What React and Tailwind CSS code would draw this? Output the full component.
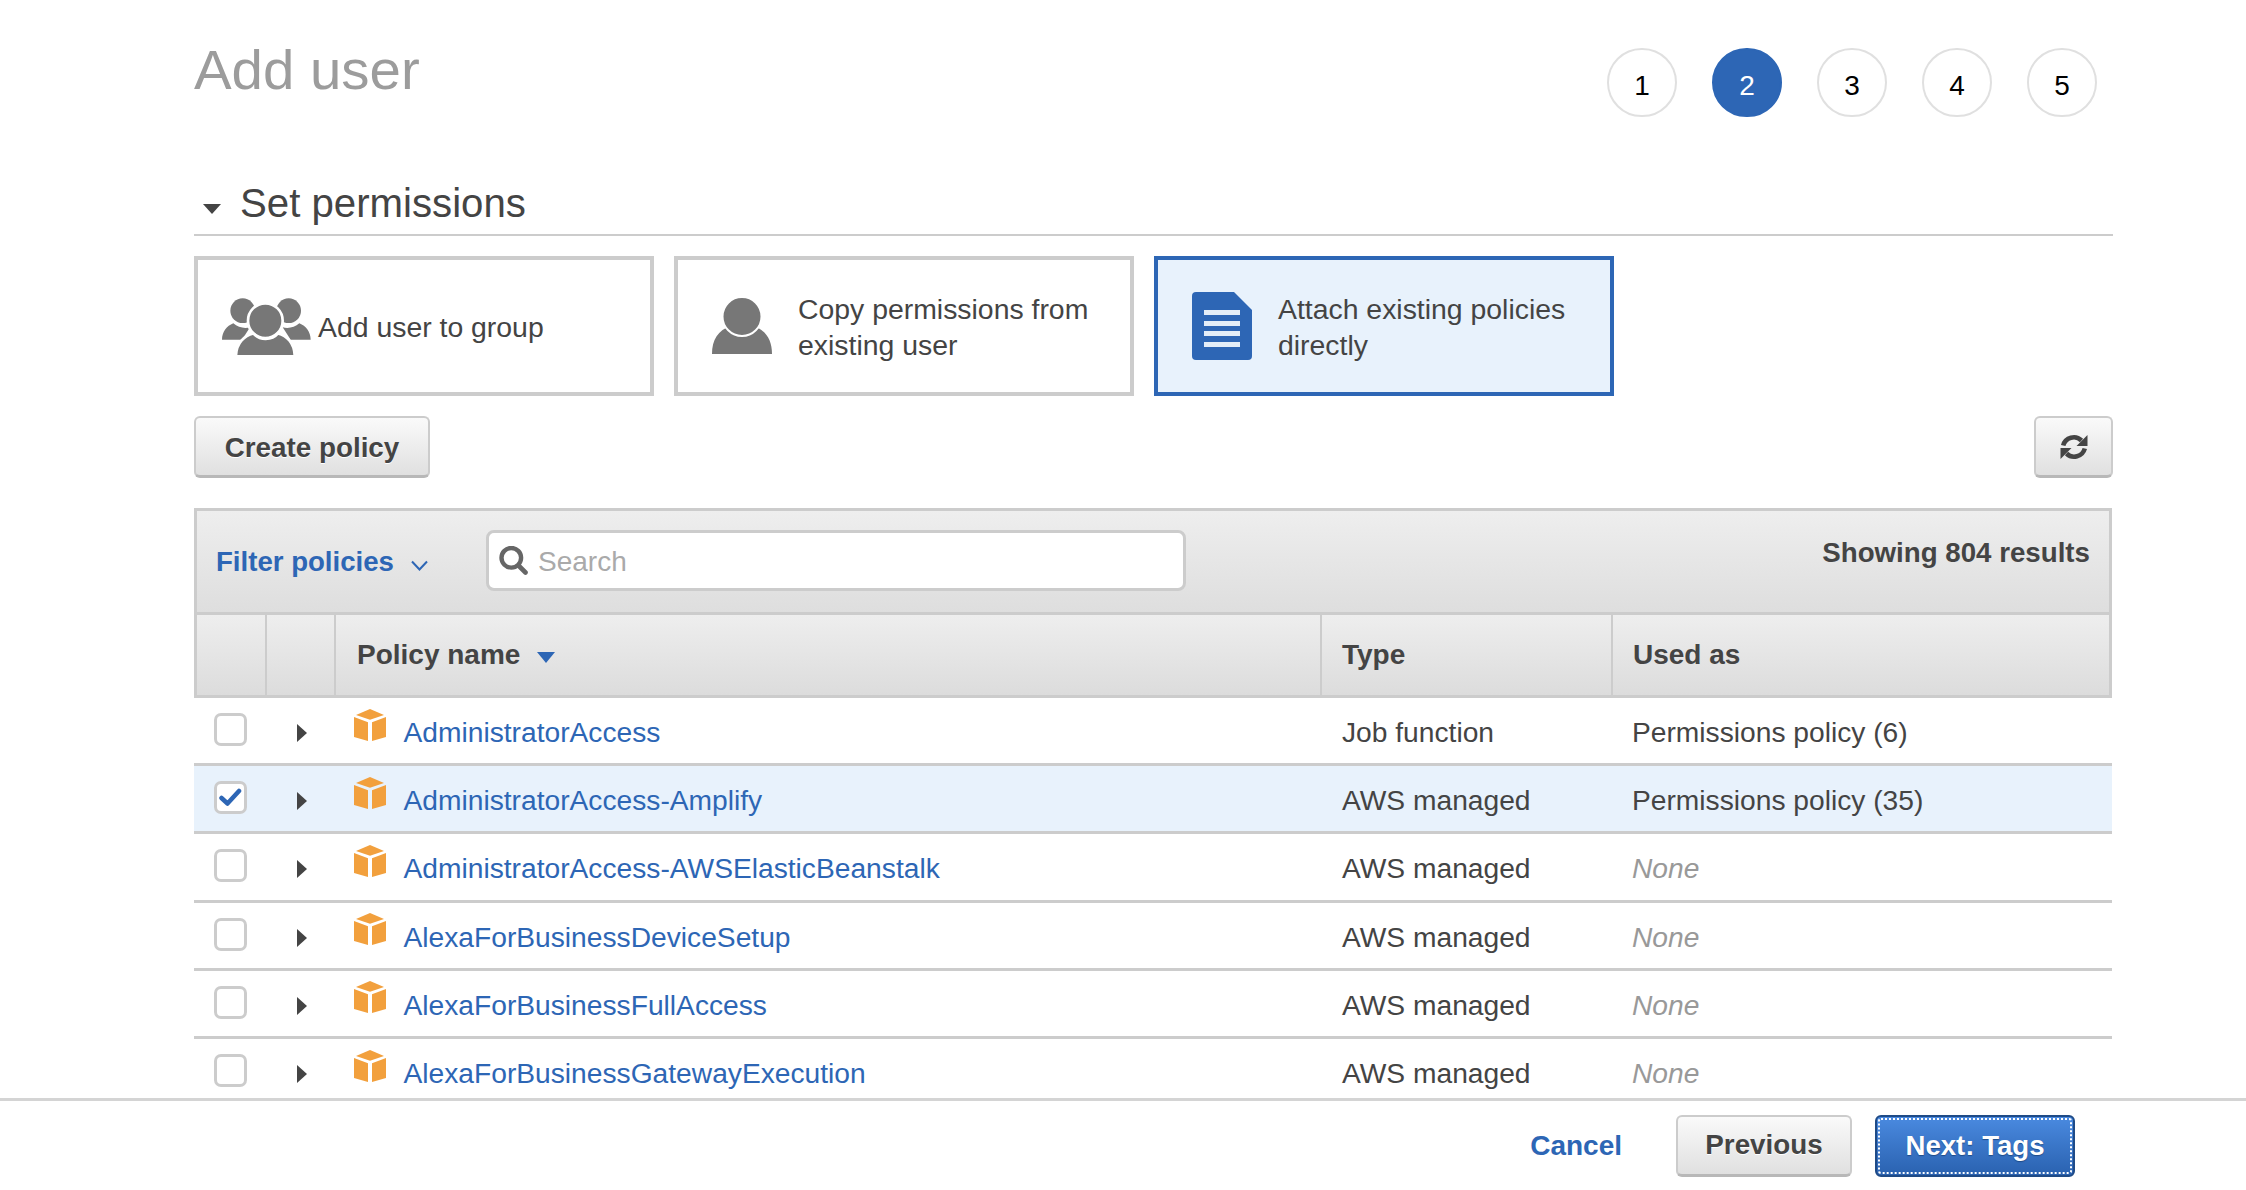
const rows = [
  { name: 'AdministratorAccess', type: 'Job function', used: 'Permissions policy (6)' },
  { name: 'AdministratorAccess-Amplify', type: 'AWS managed', used: 'Permissions policy (35)', checked: true },
  { name: 'AdministratorAccess-AWSElasticBeanstalk', type: 'AWS managed' },
  { name: 'AlexaForBusinessDeviceSetup', type: 'AWS managed' },
  { name: 'AlexaForBusinessFullAccess', type: 'AWS managed' },
  { name: 'AlexaForBusinessGatewayExecution', type: 'AWS managed' },
]

function GroupIcon() {
  return (
    <svg width="89" height="57" viewBox="0 0 267 171" className="shrink-0">
      <g fill="#777777">
        <circle cx="62" cy="38" r="37" />
        <circle cx="200" cy="38" r="37" />
        <path d="M0 125C0 102 14 84 34 76C48 90 70 92 84 88L60 125Z" />
        <path d="M266 125C266 102 252 84 232 76C218 90 196 92 182 88L206 125Z" />
      </g>
      <g fill="#777777" stroke="#ffffff" strokeWidth="8">
        <circle cx="130" cy="68" r="52" />
        <path d="M42 175C42 136 68 112 94 106C112 128 150 128 168 106C194 112 218 136 218 175Z" />
      </g>
    </svg>
  )
}

function PersonIcon() {
  return (
    <svg width="60" height="56" viewBox="0 0 60 56" className="shrink-0">
      <path fill="#777777" d="M0 56C0 42 6 32 19 28C24 36 36 36 41 28C54 32 60 42 60 56Z" />
      <circle cx="30" cy="18.5" r="19.5" fill="#777777" stroke="#ffffff" strokeWidth="2" />
    </svg>
  )
}

function DocIcon() {
  return (
    <svg width="60" height="68" viewBox="0 0 60 68" className="shrink-0">
      <path fill="#2d66b5" d="M4 0H42L60 18V64A4 4 0 0 1 56 68H4A4 4 0 0 1 0 64V4A4 4 0 0 1 4 0Z" />
      <g fill="#e3edf8">
        <rect x="12" y="18" width="36" height="5" />
        <rect x="12" y="29" width="36" height="5" />
        <rect x="12" y="39" width="36" height="5" />
        <rect x="12" y="50" width="36" height="5" />
      </g>
    </svg>
  )
}

function BoxIcon() {
  return (
    <svg width="32" height="32" viewBox="0 0 96 96" fill="#f2a03d" className="shrink-0">
      <path d="M48 0L90 18L48 32L6 18Z" />
      <path d="M0 24L42 40V96L0 84Z" />
      <path d="M96 24L54 40V96L96 84Z" />
    </svg>
  )
}

function RefreshIcon() {
  return (
    <svg width="28" height="28" viewBox="0 0 28 28">
      <g id="half">
        <path d="M3.2 12.5A11 11 0 0 1 21.5 7.5" fill="none" stroke="#444444" strokeWidth="4.6" />
        <path d="M27.5 2V13H16.5Z" fill="#444444" />
      </g>
      <g transform="rotate(180 14 14)">
        <path d="M3.2 12.5A11 11 0 0 1 21.5 7.5" fill="none" stroke="#444444" strokeWidth="4.6" />
        <path d="M27.5 2V13H16.5Z" fill="#444444" />
      </g>
    </svg>
  )
}

function SearchIcon() {
  return (
    <svg width="29" height="29" viewBox="0 0 29 29" className="shrink-0">
      <circle cx="12.3" cy="11.8" r="9.8" fill="none" stroke="#666666" strokeWidth="4.4" />
      <path d="M20 20L26.5 26.5" fill="none" stroke="#666666" strokeWidth="4.6" strokeLinecap="round" />
    </svg>
  )
}

function Card({ icon, selected, gap, pad, children }) {
  return (
    <div
      className={`flex h-[140px] w-[460px] items-center border-4 ${pad} ${gap} ${
        selected ? 'border-[#2d66b5] bg-[#e8f2fc]' : 'border-[#cccccc] bg-white'
      }`}
    >
      {icon}
      <div className="pt-[2px] text-[28.4px] leading-[36px] text-[#444444]">{children}</div>
    </div>
  )
}

function Row({ row }) {
  return (
    <div
      className={`grid h-[68.2px] grid-cols-[71px_69px_986px_291px_1fr] items-center border-b-[3px] border-[#cccccc] ${
        row.checked ? 'bg-[#e8f2fc]' : 'bg-white'
      }`}
    >
      <div className="pl-5 pb-[2px]">
        <div className="flex h-[33px] w-[33px] items-center justify-center rounded-[7px] border-[3px] border-[#cccccc] bg-white">
          {row.checked && (
            <svg width="23" height="19" viewBox="0 0 23 19">
              <path d="M2.5 10L8.5 15.5L20 3" fill="none" stroke="#2d66b5" strokeWidth="4.5" strokeLinecap="round" strokeLinejoin="round" />
            </svg>
          )}
        </div>
      </div>
      <div className="pl-[32px] pt-[5px]">
        <svg width="10" height="18" viewBox="0 0 10 18">
          <path fill="#444444" d="M0 0L10 9L0 18Z" />
        </svg>
      </div>
      <div className="flex items-center gap-[18px] pl-[19.5px]">
        <div className="-mt-[12px]">
          <BoxIcon />
        </div>
        <span className="pt-[3px] text-[#2d66b5]">{row.name}</span>
      </div>
      <div className="pl-[22px] pt-[3px]">{row.type}</div>
      <div className="pl-[21px] pt-[3px]">
        {row.used ? row.used : <span className="italic text-[#999999]">None</span>}
      </div>
    </div>
  )
}

export default function App() {
  return (
    <div className="flex h-[1190px] w-full flex-col overflow-hidden bg-white font-['Liberation_Sans',Arial,sans-serif] text-[28.2px] text-[#444444]">
      <div className="min-h-0 flex-1 overflow-hidden pl-[194px] pr-[133px]">
        <div className="flex items-start justify-between pt-[48px]">
          <h1 className="-mt-[7px] text-[56.4px] leading-[57px] text-[#9c9c9c]">Add user</h1>
          <div className="mr-[16px] flex gap-[35px]">
            {[1, 2, 3, 4, 5].map((n) => (
              <div
                key={n}
                className={`flex h-[69px] w-[70px] items-center justify-center rounded-full border-2 pt-[6px] text-[28px] ${
                  n === 2 ? 'border-[#2d66b5] bg-[#2d66b5] text-white' : 'border-[#e0e0e0] bg-white text-black'
                }`}
              >
                {n}
              </div>
            ))}
          </div>
        </div>

        <div className="mt-[62px] flex items-center gap-[19px] border-b-[2px] border-[#cccccc] pb-[6px] pl-[9px]">
          <svg width="18" height="10" viewBox="0 0 18 10" className="mt-[10px]">
            <path fill="#444444" d="M0 0H18L9 10Z" />
          </svg>
          <h2 className="pt-[1px] text-[40.2px] leading-[48px] text-[#444444]">Set permissions</h2>
        </div>

        <div className="mt-[20px] flex gap-[20px]">
          <Card icon={<GroupIcon />} pad="pl-[24px]" gap="gap-[7px]">Add user to group</Card>
          <Card icon={<PersonIcon />} pad="pl-[34px]" gap="gap-[26px]">Copy permissions from<br />existing user</Card>
          <Card icon={<DocIcon />} pad="pl-[34px]" gap="gap-[26px]" selected>Attach existing policies<br />directly</Card>
        </div>

        <div className="mt-[20px] flex items-center justify-between">
          <button className="h-[62px] w-[236px] rounded-[6px] border-2 border-b-[3px] border-[#cccccc] border-b-[#b8b8b8] bg-gradient-to-b from-[#fafafa] to-[#e0e0e0] pt-[3px] text-[27.8px] font-bold text-[#444444] [text-shadow:0_1px_0_#ffffff]">
            Create policy
          </button>
          <button className="flex h-[62px] w-[79px] items-center justify-center rounded-[6px] border-2 border-b-[3px] border-[#cccccc] border-b-[#b8b8b8] bg-gradient-to-b from-[#fafafa] to-[#e0e0e0]">
            <RefreshIcon />
          </button>
        </div>

        <div className="mt-[30px] mr-[1px]">
          <div className="flex h-[104px] items-start border-x-[3px] border-t-[3px] border-[#cccccc] bg-gradient-to-b from-[#eeeeee] to-[#dedede] pr-[19px]">
            <div className="flex h-[102px] w-[289px] items-center gap-[17px] pl-[19px]">
              <span className="text-[27.6px] font-bold text-[#2d66b5]">Filter policies</span>
              <svg width="17" height="11" viewBox="0 0 17 11" className="mt-[6px]">
                <path d="M1 1.5L8.5 9.5L16 1.5" fill="none" stroke="#2d66b5" strokeWidth="2" />
              </svg>
            </div>
            <div className="mt-[19px] flex h-[61px] w-[700px] items-center gap-[10px] rounded-[8px] border-[3px] border-[#cccccc] bg-white pl-[10px]">
              <SearchIcon />
              <span className="pt-[2px] text-[28px] text-[#aaaaaa]">Search</span>
            </div>
            <div className="mt-[21px] ml-auto text-[27.7px] font-bold text-[#444444]">Showing 804 results</div>
          </div>
          <div className="grid h-[86px] grid-cols-[70px_69px_986px_291px_1fr] border-x-[3px] border-y-[3px] border-[#cccccc] bg-gradient-to-b from-[#eeeeee] to-[#dcdcdc] text-[28px] font-bold">
            <div className="border-r-2 border-[#cccccc]" />
            <div className="border-r-2 border-[#cccccc]" />
            <div className="flex items-center gap-[17px] border-r-2 border-[#cccccc] pl-[21px]">
              <span>Policy name</span>
              <svg width="18" height="11" viewBox="0 0 18 11" className="mt-[4px]">
                <path fill="#2d66b5" d="M0 0H18L9 11Z" />
              </svg>
            </div>
            <div className="flex items-center border-r-2 border-[#cccccc] pl-[20px]">Type</div>
            <div className="flex items-center pl-[20px]">Used as</div>
          </div>
          {rows.map((row) => (
            <Row key={row.name} row={row} />
          ))}
        </div>
      </div>

      <div className="flex h-[92px] shrink-0 items-center justify-end gap-[23px] border-t-[3px] border-[#d4d4d4] bg-white pr-[171px]">
        <span className="mr-[31px] text-[28px] font-bold text-[#2d66b5]">Cancel</span>
        <button className="h-[62px] w-[176px] rounded-[6px] border-2 border-b-[3px] border-[#cccccc] border-b-[#b8b8b8] bg-gradient-to-b from-[#fafafa] to-[#e0e0e0] text-[27.8px] font-bold text-[#444444] [text-shadow:0_1px_0_#ffffff]">
          Previous
        </button>
        <button className="h-[62px] w-[200px] rounded-[6px] border-2 border-[#1f4b87] bg-gradient-to-b from-[#4a8ae0] to-[#2a62b0] text-[27.6px] font-bold text-white outline-2 outline-offset-[-5px] outline-white outline-dotted [text-shadow:0_1px_1px_#1f4b87]">
          Next: Tags
        </button>
      </div>
    </div>
  )
}
